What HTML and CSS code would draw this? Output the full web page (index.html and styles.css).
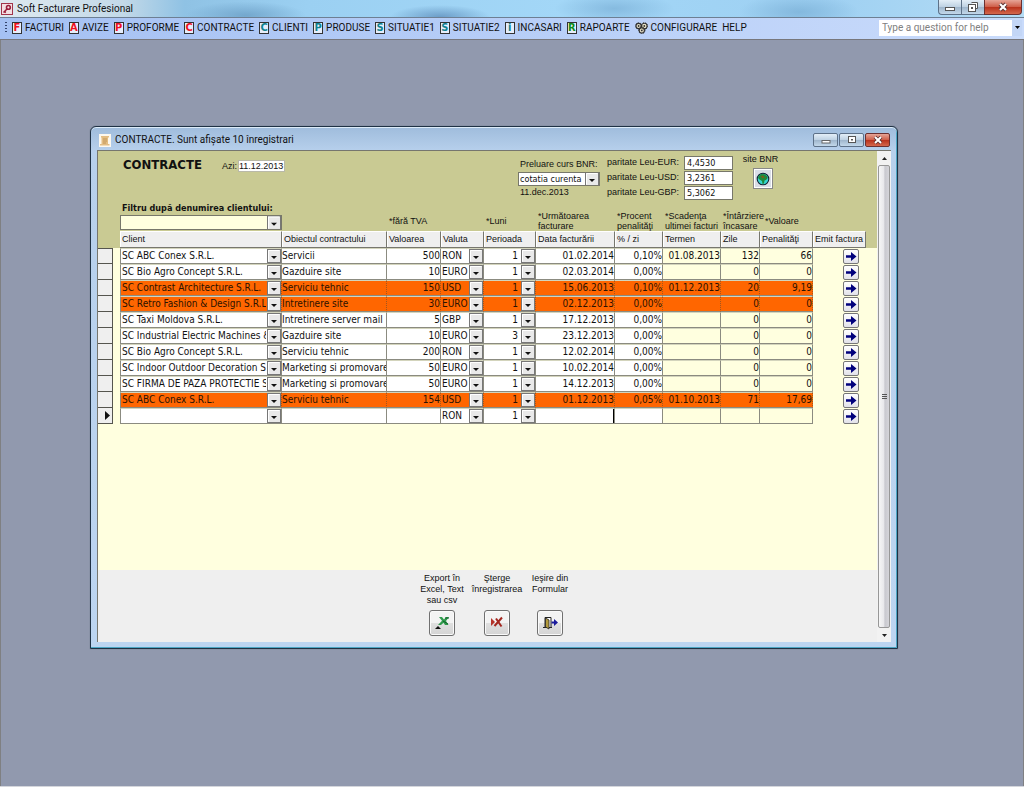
FILE: index.html
```html
<!DOCTYPE html>
<html lang="ro">
<head>
<meta charset="utf-8">
<title>Soft Facturare Profesional</title>
<link rel="stylesheet" href="styles.css">
</head>
<body>
<div class="app">
  <header class="titlebar">
    <svg class="app-icon" viewBox="0 0 12 12" aria-hidden="true"><rect x=".5" y=".5" width="11" height="11" fill="#f3dfe2" stroke="#a2344a"/><circle cx="7.4" cy="4.4" r="1.9" fill="none" stroke="#9c1f3c" stroke-width="1.6"/><path d="M6 6 2.5 9.5M3.4 8.4l1.4 1.2" stroke="#9c1f3c" stroke-width="1.5"/></svg>
    <span class="app-title">Soft Facturare Profesional</span>
    <div class="caption caption-app">
      <button type="button" aria-label="Minimize"><svg viewBox="0 0 12 10"><rect x="1.500" y="5.500" width="9" height="3" fill="#fff" stroke="#555"/></svg></button>
      <button type="button" aria-label="Restore"><svg viewBox="0 0 12 10"><path d="M4.500 .5h6v6h-2" fill="#fff" stroke="#555"/><rect x="1.500" y="2.500" width="7" height="7" fill="#fff" stroke="#555"/><rect x="4" y="5" width="2" height="2" fill="#555"/></svg></button>
      <button type="button" class="close" aria-label="Close"><svg viewBox="0 0 12 10"><path d="M3 2l6 6M9 2 3 8" stroke="#5a3030" stroke-width="4"/><path d="M3 2l6 6M9 2 3 8" stroke="#fff" stroke-width="2.200"/></svg></button>
    </div>
  </header>

  <nav class="menubar">
    <span class="grip"></span>
    <button type="button" class="menu"><span class="tile red">F</span>FACTURI</button>
    <button type="button" class="menu"><span class="tile red">A</span>AVIZE</button>
    <button type="button" class="menu"><span class="tile red">P</span>PROFORME</button>
    <button type="button" class="menu"><span class="tile red">C</span>CONTRACTE</button>
    <button type="button" class="menu"><span class="tile teal">C</span>CLIENTI</button>
    <button type="button" class="menu"><span class="tile teal">P</span>PRODUSE</button>
    <button type="button" class="menu"><span class="tile teal">S</span>SITUATIE1</button>
    <button type="button" class="menu"><span class="tile teal">S</span>SITUATIE2</button>
    <button type="button" class="menu"><span class="tile teal">i</span>INCASARI</button>
    <button type="button" class="menu"><span class="tile green">R</span>RAPOARTE</button>
    <button type="button" class="menu"><svg class="gears" viewBox="0 0 13 12" aria-hidden="true"><g fill="#e8e2c8" stroke="#333" stroke-width="1.100"><circle cx="3.600" cy="4" r="2.600"/><circle cx="9.300" cy="4" r="2.800"/><circle cx="6.800" cy="8.400" r="2.600"/></g><g fill="#333"><circle cx="3.600" cy="4" r=".9"/><circle cx="9.300" cy="4" r=".9"/><circle cx="6.800" cy="8.400" r=".9"/></g><g fill="none" stroke="#333" stroke-width="1" stroke-dasharray="1 1.300"><circle cx="3.600" cy="4" r="3.200"/><circle cx="9.300" cy="4" r="3.300"/><circle cx="6.800" cy="8.400" r="3.200"/></g></svg>CONFIGURARE</button>
    <button type="button" class="menu">HELP</button>
    <div class="ask">
      <input type="text" placeholder="Type a question for help" aria-label="Type a question for help">
      <button type="button" aria-label="Help history"><svg viewBox="0 0 5 3"><path d="M0 0h5L2.500 3z" fill="#000"/></svg></button>
    </div>
  </nav>

  <main class="workspace">
    <section class="window">
      <div class="window-title">
        <svg class="form-icon" viewBox="0 0 12 13" aria-hidden="true"><rect width="12" height="13" fill="#fdf8ee"/><path d="M2 2h8v1.500H9V10h1.500v1.500H1V10h1.500V3.500H2z" fill="#e3bd83"/><path d="M4 5h4M4 7h4M4 9h3" stroke="#b98d50" stroke-width=".8"/></svg>
        <h2>CONTRACTE. Sunt afişate 10 înregistrari</h2>
        <div class="caption caption-form">
          <button type="button" aria-label="Minimize form"><svg viewBox="0 0 12 10"><rect x="2" y="5.500" width="8" height="2.500" fill="#fff" stroke="#666"/></svg></button>
          <button type="button" aria-label="Maximize form"><svg viewBox="0 0 12 10"><rect x="2.500" y="1.500" width="7" height="6" fill="#fff" stroke="#555"/><rect x="5" y="4" width="2" height="1.500" fill="#555"/></svg></button>
          <button type="button" class="close" aria-label="Close form"><svg viewBox="0 0 12 10"><path d="M3 2l6 6M9 2 3 8" stroke="#5a3030" stroke-width="3.600"/><path d="M3 2l6 6M9 2 3 8" stroke="#fff" stroke-width="2"/></svg></button>
        </div>
      </div>

      <div class="client">
        <div class="form">
          <div class="form-header">
            <div class="heading">
              <h1>CONTRACTE</h1>
              <label for="azi">Azi:</label>
              <input id="azi" type="text" value="11.12.2013">
            </div>
            <div class="rate-source">
              <label for="curs">Preluare curs BNR:</label>
              <select id="curs" class="combo"><option>cotatia curenta</option></select>
              <span>11.dec.2013</span>
            </div>
            <div class="rates">
              <label for="eur">paritate Leu-EUR:</label><input id="eur" type="text" value="4,4530">
              <label for="usd">paritate Leu-USD:</label><input id="usd" type="text" value="3,2361">
              <label for="gbp">paritate Leu-GBP:</label><input id="gbp" type="text" value="5,3062">
            </div>
            <div class="bnr">
              <label for="bnr">site BNR</label>
              <button id="bnr" type="button"><svg viewBox="0 0 14 14" aria-hidden="true"><circle cx="7" cy="7" r="5.800" fill="#35d5d0" stroke="#123" stroke-width="1.100"/><path d="M3 3.500 5.500 2l3 .3L11 4l.8 2L10 8 8.500 8.500 8 11.500 6.500 12 6 9 3.500 7.500 2 6z" fill="#1c8a3c"/><path d="M4.500 4.500 7 3.500l1.500 1.500L7 6.500zM9 5l1.500 1-1 1.200z" fill="#77601c"/></svg></button>
            </div>
          </div>

          <table class="grid">
            <colgroup>
              <col class="w-mark"><col class="w-gap"><col class="w-client"><col class="w-object"><col class="w-value"><col class="w-currency"><col class="w-period"><col class="w-date"><col class="w-rate"><col class="w-term"><col class="w-days"><col class="w-penalty"><col class="w-issue"><col>
            </colgroup>
            <thead>
              <tr class="notes">
                <td></td><td></td>
                <td class="filter"><label for="filtru">Filtru după denumirea clientului:</label><select id="filtru" class="combo"><option></option></select></td>
                <td></td><td>*fără TVA</td><td></td><td>*Luni</td><td>*Următoarea<br>facturare</td><td>*Procent<br>penalităţi</td><td>*Scadenţa<br>ultimei facturi</td><td>*Întârziere<br>încasare</td><td class="after">*Valoare</td><td></td><td></td>
              </tr>
              <tr class="titles">
                <td></td><td></td>
                <th scope="col">Client</th><th scope="col">Obiectul contractului</th><th scope="col">Valoarea</th><th scope="col">Valuta</th><th scope="col">Perioada</th><th scope="col">Data facturării</th><th scope="col">% / zi</th><th scope="col">Termen</th><th scope="col">Zile</th><th scope="col">Penalităţi</th><th scope="col">Emit factura</th>
                <td></td>
              </tr>
            </thead>
            <tbody id="rows"></tbody>
          </table>

          <div class="detail-space"></div>

          <div class="form-footer">
            <div class="action">
              <label for="export">Export în<br>Excel, Text<br>sau csv</label>
              <button id="export" type="button"><svg viewBox="0 0 18 18" aria-hidden="true"><path d="M6 3h3l2 2.500L13 3h3l-3 4 2.500 4H12l-1.500-2.300L8 11H5l4-4.200z" fill="#2f9a4c"/><path d="M12 4h4M10 7l5 3" stroke="#11602a"/><path d="M2 15h6l-3-3z" fill="#111"/></svg></button>
            </div>
            <div class="action">
              <label for="delete">Şterge<br>înregistrarea</label>
              <button id="delete" type="button"><svg viewBox="0 0 18 18" aria-hidden="true"><path d="M3 4l4 4-4 4z" fill="#b5332a"/><path d="M14 3.500 6.500 12M8 4.500l5.500 8" stroke="#a3271f" stroke-width="2"/></svg></button>
            </div>
            <div class="action exit">
              <label for="exit">Ieşire din<br>Formular</label>
              <button id="exit" type="button"><svg viewBox="0 0 18 18" aria-hidden="true"><path d="M4 13V3.500h6V13M2 13.500h9" fill="#fff" stroke="#222"/><path d="M4.500 4 8 6v9l-3.500-2z" fill="#b39a3c" stroke="#222" stroke-width=".8"/><path d="M10.500 7.500H13V5l4 3.500-4 3.500V9.500h-2.500z" fill="#1a1a9c"/></svg></button>
            </div>
          </div>
        </div>

        <div class="scrollbar">
          <button type="button" aria-label="Scroll up"><svg viewBox="0 0 5 3"><path d="M0 3h5L2.500 0z" fill="#222"/></svg></button>
          <div class="thumb"><span></span></div>
          <button type="button" aria-label="Scroll down"><svg viewBox="0 0 5 3"><path d="M0 0h5L2.500 3z" fill="#222"/></svg></button>
        </div>
      </div>
    </section>
  </main>
</div>
<script src="rows.js"></script>
</body>
</html>
```
FILE: styles.css
```css
* { box-sizing: border-box; }

:root {
  --khaki: #c9ca93;
  --cream: #ffffdf;
  --face: #efefef;
  --line: #8b8b80;
  --ui: Roboto, "Open Sans", sans-serif;
  --data: "DejaVu Sans Condensed", "DejaVu Sans", sans-serif;
  --label: "Liberation Sans", Arial, sans-serif;
}

body { margin: 0; font: 9px/11px var(--label); color: #111; }

button, input, select {
  margin: 0; padding: 0; border: 0; border-radius: 0;
  background: none; font: inherit; color: inherit;
}

svg { display: block; }
h1, h2 { margin: 0; }

.app { display: flex; flex-direction: column; min-height: 100vh; background: #d4d6dc; }

/* Application caption */
.titlebar {
  display: flex; align-items: flex-start; height: 18px;
  border-bottom: 1px solid #6d7f93;
  background:
    radial-gradient(ellipse 60px 14px at 24% 90%, #6c9fc6cc, transparent),
    radial-gradient(ellipse 50px 12px at 43% 100%, #5f8fbccc, transparent),
    radial-gradient(ellipse 60px 16px at 60% 50%, #7fb4dacc, transparent),
    radial-gradient(ellipse 60px 18px at 78% 70%, #7db2d8cc, transparent),
    linear-gradient(90deg, #dfe9f0, #c3d9e8 12%, #8fc2e4 18%, #9bd0f2 30%, #a3d7f7 55%, #9ed0f2 80%, #b4dcf5);
}
.app-icon { width: 12px; height: 12px; margin: 3px 4px 0 1px; }
.app-title { flex: 1; font: 10px/17px var(--ui); }

.caption { display: flex; }
.caption button {
  display: flex; align-items: center; justify-content: center;
  border: 1px solid #5d7188;
  background: linear-gradient(#e3eef7, #bfd2e3 48%, #9fb6cc 52%, #c3d8ea);
}
.caption svg { width: 12px; height: 10px; }
.caption .close { background: linear-gradient(#e6a597, #cf5f4a 48%, #b9321c 52%, #d4674c); border-color: #6b3030; }
.caption-app { margin-right: 2px; }
.caption-app button { width: 23px; height: 15px; border-top: 0; border-right: 0; }
.caption-app button:first-child { border-bottom-left-radius: 4px; }
.caption-app .close { width: 38px; border-right: 1px solid #6b3030; border-bottom-right-radius: 4px; }

/* Menu */
.menubar {
  display: flex; align-items: center; gap: 5px; height: 22px; padding: 0 2px 2px 5px;
  border-bottom: 1px solid #77777c;
  background: linear-gradient(90deg, #a5c1f3, #c9dbfb);
  font: 10px/16px var(--ui);
}
.grip { width: 2px; height: 12px; background: repeating-linear-gradient(#34456c 0 1px, transparent 1px 3px); }
.menu { display: flex; align-items: center; gap: 3px; white-space: nowrap; }
.tile {
  width: 10px; height: 12px; border: 1px solid #333;
  background: #e6eefb; font: bold 11px/10px var(--data); text-align: center;
}
.red { color: #f01020; }
.teal { color: #0e8290; }
.green { color: #0a8a18; }
.gears { width: 13px; height: 12px; }
.ask { display: flex; width: 143px; height: 16px; margin-left: auto; background: #fff; }
.ask input { flex: 1; min-width: 0; padding-left: 3px; }
.ask input::placeholder { color: #808080; opacity: 1; }
.ask button { display: flex; align-items: center; justify-content: center; width: 10px; background: #c3d6f6; }
.ask svg { width: 5px; height: 3px; }

/* Workspace and form window */
.workspace {
  flex: 1; display: flex; padding: 86px 125px 137px 89px; margin-bottom: 1px;
  border: solid #7f8082; border-width: 0 1px 0 1px; background: #9199ae;
}
.window {
  flex: 1; display: flex; flex-direction: column; min-width: 0; padding: 0 6px 6px;
  border: 1px solid #1f3144; border-radius: 6px 6px 0 0;
  box-shadow: inset 0 1px #dcebf8, inset -1px -1px #4ca6c4, 0 0 1px #4a4f5c;
  background: linear-gradient(#9fbcdc, #b7d0ec 24px, #bcd5f1);
}
.window-title { display: flex; align-items: center; height: 23px; padding-top: 3px; }
.form-icon { width: 12px; height: 13px; margin: 0 4px 0 2px; }
.window-title h2 { flex: 1; font: 10px/16px var(--ui); }
.caption-form { gap: 1px; margin-right: 1px; }
.caption-form button { width: 25px; height: 14px; border-radius: 2px; }

.client { flex: 1; display: flex; border: solid #76766e; border-width: 1px 0 0 1px; background: #fff; }
.form { flex: 1; display: flex; flex-direction: column; min-width: 0; background: var(--cream); }

/* Form header */
.form-header { display: flex; height: 51px; padding-right: 100px; background: var(--khaki); }
.form-header input { background: #fff; }
.heading { flex: 1; display: flex; align-items: baseline; padding: 5px 0 0 25px; }
.heading h1 { font: bold 13px/17px var(--data); margin-right: 20px; }
.heading label { margin-right: 1px; }
.heading input { width: 47px; height: 12px; border: 1px solid #b9b9a8; }
.rate-source { display: flex; flex-direction: column; width: 89px; padding-top: 8px; }
.rate-source label, .rate-source span { padding-left: 2px; }
.rate-source .combo { width: 82px; height: 14px; margin: 2px 0 1px; background-color: #fff; font: 9px/12px var(--data); }
.rates { display: grid; grid-template-columns: 77px 49px; grid-auto-rows: 15px; align-items: center; padding-top: 4px; }
.rates input { width: 49px; height: 14px; padding-left: 2px; border: 1px solid #77776a; font: 9px/12px var(--data); }
.bnr { display: flex; flex-direction: column; align-items: center; width: 33px; margin-left: 11px; padding-top: 3px; white-space: nowrap; }
.bnr button {
  display: flex; align-items: center; justify-content: center;
  width: 20px; height: 21px; margin: 3px 0 0 4px; border: 1px solid #888; box-shadow: inset 0 0 0 1px #fff; background: #d9dde6;
}
.bnr svg { width: 14px; height: 14px; }

/* Drop-downs share one arrow button drawn at the right edge */
.combo {
  appearance: none; border: 1px solid #77776a; padding: 0 14px 0 1px;
  background: url("data:image/svg+xml,%3Csvg xmlns='http://www.w3.org/2000/svg' width='14' height='14'%3E%3Crect x='.5' y='.5' width='13' height='13' fill='%23e9e9e9' stroke='%23777'/%3E%3Cpath d='M1.500 12.500v-11h11' fill='none' stroke='%23fff'/%3E%3Cpath d='M4 7h6L7 10z' fill='%23111'/%3E%3C/svg%3E") right center no-repeat;
}

/* Contracts grid */
.grid { width: 100%; table-layout: fixed; border-collapse: separate; border-spacing: 0; }
.grid td, .grid th { padding: 0; overflow: hidden; white-space: nowrap; text-align: left; }
.grid thead { background: var(--khaki); }
.w-mark { width: 15px; }
.w-gap { width: 7px; }
.w-client { width: 162px; }
.w-object { width: 105px; }
.w-value { width: 54px; }
.w-currency { width: 43px; }
.w-period { width: 52px; }
.w-date { width: 79px; }
.w-rate { width: 48px; }
.w-term { width: 58px; }
.w-days { width: 39px; }
.w-penalty { width: 53px; }
.w-issue { width: 53px; }

.grid .notes td { height: 29px; padding: 8px 0 0 2px; line-height: 10px; overflow: visible; }
.grid .notes .after { padding-left: 5px; }
.grid .notes .filter { padding: 0; vertical-align: top; }
.filter label { display: block; padding-left: 2px; font: bold 9px/13px var(--data); }
.filter .combo { display: block; width: 100%; height: 15px; background-color: var(--cream); }

.titles td { height: 17px; }
.grid .titles th {
  height: 17px; padding: 0 2px; font-weight: normal; background: var(--face);
  border: solid #77776e; border-width: 1px 1px 1px 0; border-top-color: #fff;
  box-shadow: inset 1px 0 #fff;
}

.row { font: 10px/14px var(--data); }
.row td { height: 16px; }
.row .cell { border: 1px solid var(--line); border-left: 0; border-top-color: #d3d4bc; background: #fff; }
.row .first { border-left: 1px solid var(--line); }
.row .calc { background: var(--cream); }
.row input, .row select { display: block; width: 100%; height: 14px; border: 0; }
.row select { padding: 0 15px 0 1px; }
.row .num input { text-align: right; }
.row .num select { text-align-last: right; padding-right: 17px; }
.row.late .cell { background: #ff6600; border-right: 1px dotted #a0561f; color: #2b1200; }
.row.current .date input { border-right: 1px solid #000; }
.row .mark { border: solid #55554f; border-width: 0 1px 1px 0; background: var(--face); }
.row:first-child .mark { border-top-width: 1px; }
.mark svg { width: 5px; height: 9px; margin-left: 7px; }
.row .issue { padding-left: 30px; }
.issue button {
  display: flex; align-items: center; justify-content: center;
  width: 16px; height: 15px; border: 1px solid #777; border-radius: 2px; background: linear-gradient(#fff, #e2e2ea);
}
.issue svg { width: 12px; height: 11px; }

.detail-space { flex: 1; }

/* Form footer */
.form-footer { display: flex; gap: 1px; height: 72px; padding: 3px 0 6px 317px; background: var(--face); }
.action { display: flex; flex-direction: column; align-items: center; justify-content: space-between; width: 54px; text-align: center; white-space: nowrap; }
.exit { width: 50px; }
.action button {
  display: flex; align-items: center; justify-content: center;
  width: 26px; height: 26px; border: 1px solid #707070; border-radius: 3px;
  box-shadow: inset 0 0 0 1px #fafafa; background: linear-gradient(#f3f3f3 48%, #dfdfdf 52%, #d4d4d4);
}
.action svg { width: 18px; height: 18px; }

/* Scrollbar */
.scrollbar { display: flex; flex-direction: column; width: 14px; background: #f2f2f2; }
.scrollbar button { display: flex; align-items: center; justify-content: center; height: 14px; }
.scrollbar svg { width: 5px; height: 3px; }
.thumb {
  flex: 1; display: flex; align-items: center; justify-content: center;
  margin: 0 1px; border: 1px solid #979797; border-radius: 2px;
  background: linear-gradient(90deg, #f6f6f6, #e9e9ec 45%, #c9c9cf 60%, #d5d5da);
}
.thumb span { width: 5px; height: 6px; background: repeating-linear-gradient(#555 0 1px, transparent 1px 2px); }
```
FILE: rows.js
```js
const contracts = [
  ["SC ABC Conex S.R.L.", "Servicii", "500", "RON", "1", "01.02.2014", "0,10%", "01.08.2013", "132", "66"],
  ["SC Bio Agro Concept S.R.L.", "Gazduire site", "10", "EURO", "1", "02.03.2014", "0,00%", "", "0", "0"],
  ["SC Contrast Architecture S.R.L.", "Serviciu tehnic", "150", "USD", "1", "15.06.2013", "0,10%", "01.12.2013", "20", "9,19", "late"],
  ["SC Retro Fashion & Design S.R.L.", "Intretinere site", "30", "EURO", "1", "02.12.2013", "0,00%", "", "0", "0", "late"],
  ["SC Taxi Moldova S.R.L.", "Intretinere server mail", "5", "GBP", "1", "17.12.2013", "0,00%", "", "0", "0"],
  ["SC Industrial Electric Machines & Tools", "Gazduire site", "10", "EURO", "3", "23.12.2013", "0,00%", "", "0", "0"],
  ["SC Bio Agro Concept S.R.L.", "Serviciu tehnic", "200", "RON", "1", "12.02.2014", "0,00%", "", "0", "0"],
  ["SC Indoor Outdoor Decoration S.R.L.", "Marketing si promovare", "50", "EURO", "1", "10.02.2014", "0,00%", "", "0", "0"],
  ["SC FIRMA DE PAZA PROTECTIE SRL", "Marketing si promovare", "50", "EURO", "1", "14.12.2013", "0,00%", "", "0", "0"],
  ["SC ABC Conex S.R.L.", "Serviciu tehnic", "154", "USD", "1", "01.12.2013", "0,05%", "01.10.2013", "71", "17,69", "late"],
  ["", "", "", "RON", "1", "", "", "", "", "", "current"]
];

const fields = [
  { name: "Client", kind: "select", css: "cell first" },
  { name: "Obiectul contractului", kind: "input", css: "cell" },
  { name: "Valoarea", kind: "input", css: "cell num" },
  { name: "Valuta", kind: "select", css: "cell" },
  { name: "Perioada", kind: "select", css: "cell num" },
  { name: "Data facturării", kind: "input", css: "cell num date" },
  { name: "% / zi", kind: "input", css: "cell num" },
  { name: "Termen", kind: "input", css: "cell num calc" },
  { name: "Zile", kind: "input", css: "cell num calc" },
  { name: "Penalităţi", kind: "input", css: "cell num calc" }
];

const marker = '<svg viewBox="0 0 5 9" aria-hidden="true"><path d="M0 0l5 4.500L0 9z" fill="#111"/></svg>';
const arrow = '<svg viewBox="0 0 12 11" aria-hidden="true"><path d="M1 4.300h5V1l5.500 4.500L6 10V6.800H1z" fill="#00007c"/></svg>';
const escape = text => text.replace(/&/g, "&amp;");

const control = (field, value) => field.kind === "select"
  ? `<select class="combo" aria-label="${field.name}"><option>${escape(value)}</option></select>`
  : `<input type="text" aria-label="${field.name}" value="${escape(value)}">`;

document.getElementById("rows").innerHTML = contracts.map(record => {
  const state = record[10] || "";
  const cells = fields.map((field, i) => `<td class="${field.css}">${control(field, record[i])}</td>`).join("");
  return `<tr class="row ${state}"><td class="mark">${state === "current" ? marker : ""}</td><td></td>${cells}` +
    `<td class="issue"><button type="button" aria-label="Emit factura">${arrow}</button></td><td></td></tr>`;
}).join("");
```
